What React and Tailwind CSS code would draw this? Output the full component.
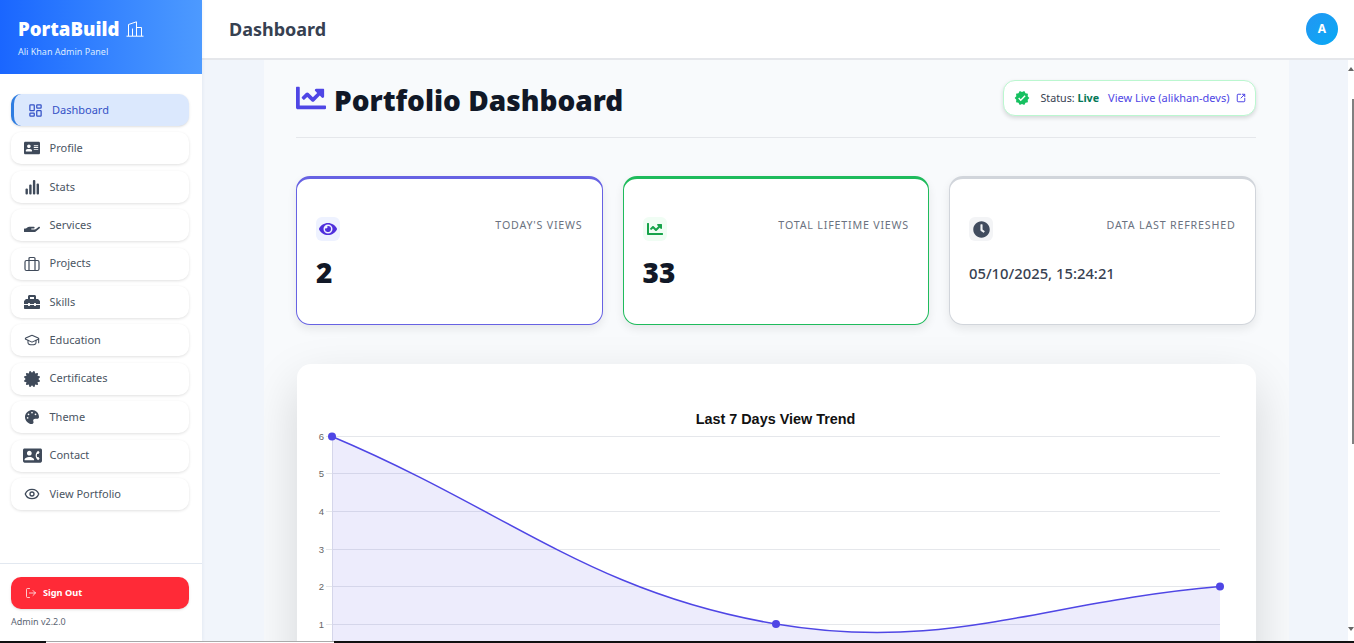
import React from "react";
import { LayoutDashboard, Eye, LogOut, SquareArrowOutUpRight, GraduationCap } from "lucide-react";
import {
  FaHandHolding,
  FaToolbox,
  FaCertificate,
  FaPalette,
  FaAddressCard,
  FaEye,
  FaClock,
  FaChartLine,
} from "react-icons/fa";
import { MdVerified, MdContactPhone } from "react-icons/md";

const font = "font-['Noto_Sans','Open_Sans',sans-serif]";

// bars for the Stats item
function StatsIcon() {
  return (
    <svg viewBox="0 0 16 16" className="w-4 h-4" fill="currentColor">
      <rect x="1.5" y="9.5" width="2.4" height="6" rx="1" />
      <rect x="5.2" y="5.5" width="2.4" height="10" rx="1" />
      <rect x="8.9" y="1" width="2.4" height="14.5" rx="1" />
      <rect x="12.6" y="4.5" width="2.4" height="11" rx="1" />
    </svg>
  );
}

function ProjectsIcon() {
  return (
    <svg viewBox="0 0 16 16" className="w-4 h-4" fill="none" stroke="currentColor" strokeWidth="1.2">
      <rect x="1" y="4.5" width="14" height="10" rx="1.5" />
      <path d="M5 14.5V2.5a1 1 0 0 1 1-1h4a1 1 0 0 1 1 1v12" />
    </svg>
  );
}

function BuildingIcon() {
  return (
    <svg viewBox="0 0 18 16" className="w-[18px] h-4" fill="none" stroke="currentColor" strokeWidth="1">
      <path d="M0.5 15.2H17.5" />
      <path d="M2.5 15V3.5L10.5 0.8V15" />
      <path d="M10.5 6.5H15.5V15" />
      <path d="M6.5 15V7.5" />
    </svg>
  );
}

const navItems = [
  { label: "Profile", icon: <FaAddressCard className="w-4 h-4" /> },
  { label: "Stats", icon: <StatsIcon /> },
  { label: "Services", icon: <FaHandHolding className="w-4 h-4" /> },
  { label: "Projects", icon: <ProjectsIcon /> },
  { label: "Skills", icon: <FaToolbox className="w-4 h-4" /> },
  { label: "Education", icon: <GraduationCap className="w-4 h-4" strokeWidth={1.6} /> },
  { label: "Certificates", icon: <FaCertificate className="w-4 h-4" /> },
  { label: "Theme", icon: <FaPalette className="w-[14px] h-[14px]" /> },
  { label: "Contact", icon: <MdContactPhone className="w-[19px] h-[19px] shrink-0" /> },
  { label: "View Portfolio", icon: <Eye className="w-4 h-4" /> },
];

function Sidebar() {
  return (
    <aside className="w-[202px] shrink-0 h-full bg-white flex flex-col z-10 shadow-[1px_0_3px_rgba(30,60,120,0.06)]">
      <div className="h-[74px] bg-gradient-to-r from-[#1a66ff] to-[#4d9aff] pl-[18px] pt-[17px] text-white">
        <div className="flex items-center gap-[7px] h-[24px]">
          <span className="text-[18.6px] font-black leading-6">PortaBuild</span>
          <BuildingIcon />
        </div>
        <p className="text-[9px] mt-[3px] leading-4 text-[#dbeafe]">Ali Khan Admin Panel</p>
      </div>

      <nav className="flex-1 pl-[11px] pr-[13px] pt-[20px] flex flex-col gap-[6.4px]">
        <div className="h-[32px] rounded-[10px] bg-[#dbe8fd] border-l-[3px] border-[#2f7de1] pl-[14px] flex items-center gap-[9px] text-[#3451c6] text-[11px] shadow-sm">
          <LayoutDashboard className="w-[15px] h-[15px]" strokeWidth={2} />
          <span>Dashboard</span>
        </div>
        {navItems.map((item) => (
          <div
            key={item.label}
            className="h-[32px] rounded-[10px] bg-white pl-[13px] flex items-center gap-[9.5px] text-[#4b5563] text-[11px] shadow-[0_1px_3px_rgba(0,0,0,0.12)]"
          >
            <span className="w-[16px] flex justify-center text-[#3f4a5a]">{item.icon}</span>
            <span>{item.label}</span>
          </div>
        ))}
      </nav>

      <div className="h-[78px] border-t border-[#e2e8f0] pl-[11px] pr-[13px] pt-[13px]">
        <div className="h-[32px] rounded-[10px] bg-[#ff2a37] pl-[14px] flex items-center gap-[6px] text-white text-[9.2px] font-bold shadow-sm">
          <LogOut className="w-[12px] h-[12px]" strokeWidth={1.5} />
          <span>Sign Out</span>
        </div>
        <p className="text-[9px] text-[#5b6472] mt-[6px]">Admin v2.2.0</p>
      </div>
    </aside>
  );
}

function StatCard({ label, value, icon, iconBg, borderClass, valueClass }) {
  return (
    <div className={`flex-1 h-[149px] rounded-[14px] bg-white border border-t-[3px] ${borderClass} px-[19px] pt-[38px] shadow-[0_4px_10px_rgba(0,0,0,0.08)]`}>
      <div className="flex justify-between">
        <div className={`w-[24px] h-[24px] rounded-md flex items-center justify-center ${iconBg}`}>{icon}</div>
        <span className="text-[10.7px] tracking-[0.8px] text-[#6b7280] uppercase leading-4">{label}</span>
      </div>
      <p className={valueClass}>{value}</p>
    </div>
  );
}

function TrendChart() {
  const ys = [
    [6, 436.5],
    [5, 473.5],
    [4, 511.5],
    [3, 549.5],
    [2, 586.5],
    [1, 624.5],
  ];
  const curve = "M332 436.5 C509.6 511.5 591.3 592.8 776 624 C946.5 652.8 1042.4 601.5 1220 586.5";
  return (
    <svg width="958" height="277" viewBox="297 364 958 277" className="absolute left-0 top-0">
      {ys.map(([n, y]) => (
        <g key={n}>
          <line x1="326" x2="1220" y1={y} y2={y} stroke="#e5e7eb" />
          <text x="324" y={y + 3.5} textAnchor="end" fontSize="9.5" fill="#666" fontFamily="Liberation Sans, sans-serif">
            {n}
          </text>
        </g>
      ))}
      <line x1="332.5" x2="332.5" y1="436" y2="641" stroke="#e5e7eb" />
      <path d={`${curve} L1220 641 L332 641 Z`} fill="rgba(79,70,229,0.1)" />
      <path d={curve} fill="none" stroke="#4f46e5" strokeWidth="1.5" />
      <circle cx="332" cy="436.5" r="4" fill="#4f46e5" />
      <circle cx="776" cy="624" r="4" fill="#4f46e5" />
      <circle cx="1220" cy="586.5" r="4" fill="#4f46e5" />
      <text x="775.5" y="424" textAnchor="middle" fontSize="14.4" fontWeight="700" fill="#111" fontFamily="Liberation Sans, sans-serif">
        Last 7 Days View Trend
      </text>
    </svg>
  );
}

function Scrollbar() {
  return (
    <div className="w-[6px] shrink-0 bg-white flex flex-col items-end pt-[7px] pb-[10px]">
      <div className="w-0 h-0 border-x-[3px] border-x-transparent border-b-[4px] border-b-[#666]" />
      <div className="w-[2px] h-[345px] bg-[#808080] mt-[28px]" />
      <div className="flex-1" />
      <div className="w-0 h-0 border-x-[3px] border-x-transparent border-t-[4px] border-t-[#666]" />
    </div>
  );
}

export default function App() {
  return (
    <div className={`${font} w-[1354px] h-[643px] overflow-hidden flex flex-col bg-[#f1f5fb]`}>
      <div className="h-[641px] flex shrink-0">
        <Sidebar />
        <div className="flex-1 flex flex-col min-w-0">
          <header className="h-[60px] shrink-0 bg-white border-b-2 border-[#e5e7eb] flex items-center justify-between pl-[27px] pr-[16px]">
            <h2 className="text-[18px] font-bold text-[#374151]">Dashboard</h2>
            <div className="w-8 h-8 rounded-full bg-gradient-to-br from-[#2196f3] to-[#03a9f4] text-white text-[12px] font-bold flex items-center justify-center">A</div>
          </header>
          <div className="flex-1 flex min-h-0">
            <main className="ml-[62px] w-[1025px] bg-[#f8fafc] pl-[32px] pr-[33.5px] pt-[20px] overflow-hidden">
              <div className="flex items-start justify-between h-[58px] border-b border-[#e5e7eb]">
                <div className="flex items-center gap-[8px] h-[40px]">
                  <FaChartLine className="w-[30px] h-[30px] text-[#4f46e5] -mt-1" />
                  <h1 className="text-[28px] font-black text-[#111827] leading-10">Portfolio Dashboard</h1>
                </div>
                <div className="h-[36px] rounded-[12px] bg-white border border-[#bbf7d0] shadow-[0_2px_4px_rgba(0,0,0,0.14)] flex items-center pl-[10px] pr-[9px] text-[10.7px]">
                  <MdVerified className="w-[16px] h-[16px] text-[#16c060]" />
                  <span className="ml-[10px] text-[#374151]">Status: <b className="text-[#047857]">Live</b></span>
                  <span className="ml-[9px] text-[11px] text-[#4f46e5]">View Live (alikhan-devs)</span>
                  <SquareArrowOutUpRight className="ml-[6px] w-[10px] h-[10px] text-[#4f46e5]" strokeWidth={2.4} />
                </div>
              </div>

              <div className="flex gap-[20px] mt-[38px]">
                <StatCard
                  label="Today's Views"
                  value="2"
                  icon={<FaEye className="w-[18px] h-[18px] text-[#4f2fdc]" />}
                  iconBg="bg-[#eef2ff]"
                  borderClass="border-[#6762e3]"
                  valueClass="text-[28px] font-black text-[#111827] leading-9 mt-[13px]"
                />
                <StatCard
                  label="Total Lifetime Views"
                  value="33"
                  icon={<FaChartLine className="w-[16px] h-[16px] text-[#16a34a]" />}
                  iconBg="bg-[#f0fdf4]"
                  borderClass="border-[#1fbb5c]"
                  valueClass="text-[28px] font-black text-[#111827] leading-9 mt-[13px]"
                />
                <StatCard
                  label="Data Last Refreshed"
                  value="05/10/2025, 15:24:21"
                  icon={<FaClock className="w-[17px] h-[17px] text-[#414c5e]" />}
                  iconBg="bg-[#f3f4f6]"
                  borderClass="border-[#d1d5db]"
                  valueClass="text-[14.8px] font-medium text-[#374151] leading-6 mt-[20px]"
                />
              </div>

              <div className="relative ml-px mt-[39px] h-[400px] rounded-[14px] bg-white shadow-[0_20px_50px_rgba(0,0,0,0.15)]">
                <TrendChart />
              </div>
            </main>
            <div className="flex-1" />
            <Scrollbar />
          </div>
        </div>
      </div>
      {/* strip along the bottom edge of the capture */}
      <div className="h-[2px] flex shrink-0">
        <div className="w-[46px] bg-[#111]" />
        <div className="w-[288px] bg-white border-t border-[#aaa]" />
        <div className="flex-1 bg-[#111]" />
      </div>
    </div>
  );
}
